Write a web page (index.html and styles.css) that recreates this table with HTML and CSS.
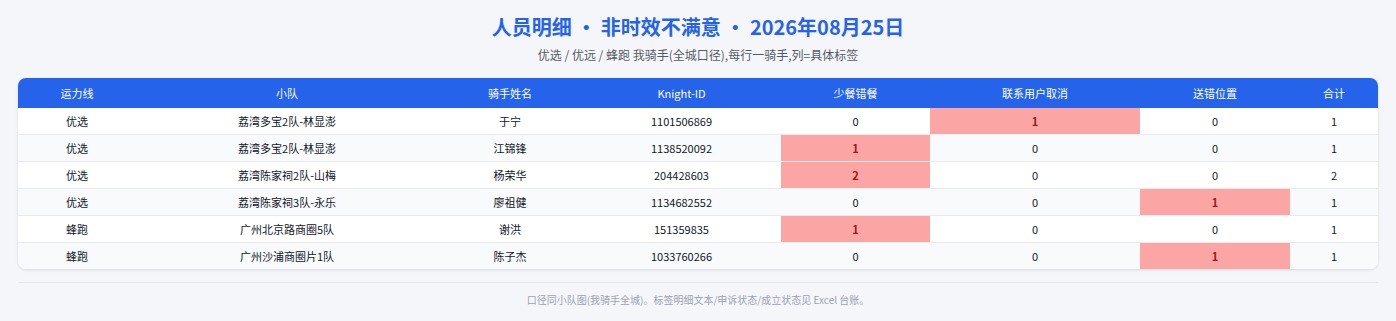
FILE: index.html
```html
<!DOCTYPE html>
<html lang="zh">
<head>
<meta charset="utf-8">
<link rel="stylesheet" href="styles.css">
</head>
<body>
<div class="page">
  <h1 class="title">人员明细 · 非时效不满意 · 2026年08月25日</h1>
  <p class="subtitle">优选 / 优远 / 蜂跑 我骑手(全城口径),每行一骑手,列=具体标签</p>
  <div class="card">
    <table class="grid">
      <colgroup>
        <col class="c1"><col class="c2"><col class="c3"><col class="c4"><col class="c5"><col class="c6"><col class="c7"><col class="c8">
      </colgroup>
      <thead>
        <tr><th>运力线</th><th>小队</th><th>骑手姓名</th><th>Knight-ID</th><th>少餐错餐</th><th>联系用户取消</th><th>送错位置</th><th>合计</th></tr>
      </thead>
      <tbody>
        <tr><td>优选</td><td>荔湾多宝2队-林显澎</td><td>于宁</td><td>1101506869</td><td>0</td><td class="hit">1</td><td>0</td><td>1</td></tr>
        <tr><td>优选</td><td>荔湾多宝2队-林显澎</td><td>江锦锋</td><td>1138520092</td><td class="hit">1</td><td>0</td><td>0</td><td>1</td></tr>
        <tr><td>优选</td><td>荔湾陈家祠2队-山梅</td><td>杨荣华</td><td>204428603</td><td class="hit">2</td><td>0</td><td>0</td><td>2</td></tr>
        <tr><td>优选</td><td>荔湾陈家祠3队-永乐</td><td>廖祖健</td><td>1134682552</td><td>0</td><td>0</td><td class="hit">1</td><td>1</td></tr>
        <tr><td>蜂跑</td><td>广州北京路商圈5队</td><td>谢洪</td><td>151359835</td><td class="hit">1</td><td>0</td><td>0</td><td>1</td></tr>
        <tr><td>蜂跑</td><td>广州沙浦商圈片1队</td><td>陈子杰</td><td>1033760266</td><td>0</td><td>0</td><td class="hit">1</td><td>1</td></tr>
      </tbody>
    </table>
  </div>
  <div class="rule"></div>
  <p class="foot">口径同小队图(我骑手全城)。标签明细文本/申诉状态/成立状态见 Excel 台账。</p>
</div>
</body>
</html>
```

FILE: styles.css
```css
html, body {
  margin: 0;
  padding: 0;
  background: #f5f6f9;
}
body {
  font-family: "Noto Sans CJK SC", "Noto Sans", sans-serif;
  color: #111827;
}
.page {
  padding: 12px 18px 0;
}
.title {
  margin: 0;
  text-align: center;
  font-size: 20px;
  line-height: 30px;
  font-weight: 700;
  color: #2563eb;
}
.subtitle {
  margin: 4px 0 0;
  text-align: center;
  font-size: 12px;
  line-height: 18px;
  color: #555b66;
}
.card {
  margin-top: 14px;
  background: #fff;
  border-radius: 8px;
  overflow: hidden;
  box-shadow: 0 1px 3px rgba(0,0,0,0.12);
}
.grid {
  width: 100%;
  border-collapse: separate;
  border-spacing: 0;
  table-layout: fixed;
  font-size: 11px;
}
.c1 { width: 118px; }
.c2 { width: 302px; }
.c3 { width: 144px; }
.c4 { width: 199px; }
.c5 { width: 149px; }
.c6 { width: 210px; }
.c7 { width: 150px; }
.c8 { width: 88px; }
.grid th {
  background: #2563eb;
  color: #fff;
  font-weight: 400;
  height: 30px;
  padding: 0;
  text-align: center;
}
.grid td {
  height: 26px;
  padding: 0;
  text-align: center;
  border-bottom: 1px solid #e8eaee;
  color: #111827;
}
.grid tbody tr:last-child td { border-bottom: none; }
.grid tbody tr:nth-child(even) td { background: #f9fafb; }
.grid td.hit, .grid tbody tr:nth-child(even) td.hit {
  background: #fca5a5;
  color: #991b1b;
  font-weight: 700;
  border-bottom-color: #fdf2f2;
}
.rule {
  margin-top: 13px;
  height: 1px;
  background: #e5e7eb;
}
.foot {
  margin: 10px 0 0;
  text-align: center;
  font-size: 10px;
  line-height: 14px;
  color: #9ca3af;
}
```
